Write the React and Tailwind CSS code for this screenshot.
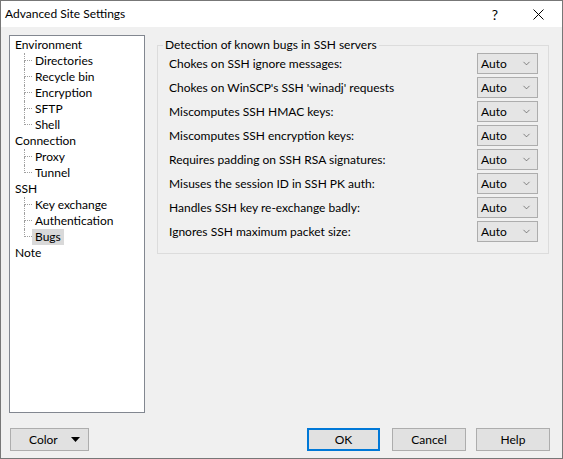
import { ChevronDown } from 'lucide-react';

const font = { fontFamily: 'Lato, "Liberation Sans", Arial, sans-serif' };

const tree = [
  { label: 'Environment', children: ['Directories', 'Recycle bin', 'Encryption', 'SFTP', 'Shell'] },
  { label: 'Connection', children: ['Proxy', 'Tunnel'] },
  { label: 'SSH', children: ['Key exchange', 'Authentication', 'Bugs'] },
  { label: 'Note', children: [] },
];

const bugs = [
  'Chokes on SSH ignore messages:',
  "Chokes on WinSCP's SSH 'winadj' requests",
  'Miscomputes SSH HMAC keys:',
  'Miscomputes SSH encryption keys:',
  'Requires padding on SSH RSA signatures:',
  'Misuses the session ID in SSH PK auth:',
  'Handles SSH key re-exchange badly:',
  'Ignores SSH maximum packet size:',
];

function TreeChild({ label, last, selected }) {
  return (
    <div className="flex h-[16px] items-stretch">
      <div className="ml-[9px] flex w-[8px] flex-col">
        <div className="h-[8px] border-b border-l border-dotted border-[#a0a0a0]" />
        <div className={last ? 'h-[8px]' : 'h-[8px] border-l border-dotted border-[#a0a0a0]'} />
      </div>
      <span className={'flex items-center px-[3px] leading-none ' + (selected ? 'bg-[#d9d9d9]' : '')}>
        {label}
      </span>
    </div>
  );
}

function Combo() {
  return (
    <div className="flex h-[21px] w-[61px] items-center justify-between border border-[#adadad] bg-[#e5e5e5] pl-[3px] pr-[5px]">
      <span>Auto</span>
      <ChevronDown size={11} strokeWidth={1.3} className="text-[#3c3c3c]" />
    </div>
  );
}

export default function App() {
  return (
    <div
      className="flex h-[459px] w-[563px] flex-col border border-[#777777] bg-[#f0f0f0] text-[12px] text-black"
      style={font}
    >
      <div className="flex h-[26px] shrink-0 items-center bg-white">
        <span className="ml-[4px] flex-1 text-[12px]">Advanced Site Settings</span>
        <span className="mr-[35px] text-[14px]">?</span>
        <svg width="11" height="11" viewBox="0 0 11 11" className="mr-[18px]">
          <path d="M0.5 0.5 L10.5 10.5 M10.5 0.5 L0.5 10.5" stroke="#000" strokeWidth="1" fill="none" />
        </svg>
      </div>

      <div className="flex flex-1 flex-col px-[8px] pt-[8px] pb-[7px]">
        <div className="flex flex-1 gap-[12px]">
          <div className="h-[378px] w-[136px] border border-[#828790] bg-white pt-[1px] pl-[5px]">
            {tree.map((node) => (
              <div key={node.label}>
                <div className="flex h-[16px] items-center">{node.label}</div>
                {node.children.map((c, i) => (
                  <TreeChild
                    key={c}
                    label={c}
                    last={i === node.children.length - 1}
                    selected={c === 'Bugs'}
                  />
                ))}
              </div>
            ))}
          </div>

          <div className="flex-1 pr-[4px]">
            <fieldset className="mt-[2px] h-[217px] w-[392px] border border-[#dcdcdc] px-0">
              <legend className="ml-[5px] px-[2px] leading-[16px]">Detection of known bugs in SSH servers</legend>
              <div className="flex flex-col gap-[3px] px-[10px]">
                {bugs.map((b) => (
                  <div key={b} className="flex items-center justify-between">
                    <span className="pl-[1px]">{b}</span>
                    <Combo />
                  </div>
                ))}
              </div>
            </fieldset>
          </div>
        </div>

        <div className="flex h-[23px] items-stretch">
          <button className="ml-[1px] flex w-[79px] items-center justify-between border border-[#adadad] bg-[#e1e1e1] pl-[18px] pr-[8px]">
            <span>Color</span>
            <svg width="9" height="5" viewBox="0 0 9 5">
              <path d="M0 0 L9 0 L4.5 5 Z" fill="#000" />
            </svg>
          </button>
          <div className="flex-1" />
          <button className="w-[73px] border-2 border-[#0078d7] bg-[#e1e1e1]">OK</button>
          <button className="ml-[12px] w-[74px] border border-[#adadad] bg-[#e1e1e1]">Cancel</button>
          <button className="ml-[10px] mr-[4px] w-[74px] border border-[#adadad] bg-[#e1e1e1]">Help</button>
        </div>
      </div>
    </div>
  );
}
